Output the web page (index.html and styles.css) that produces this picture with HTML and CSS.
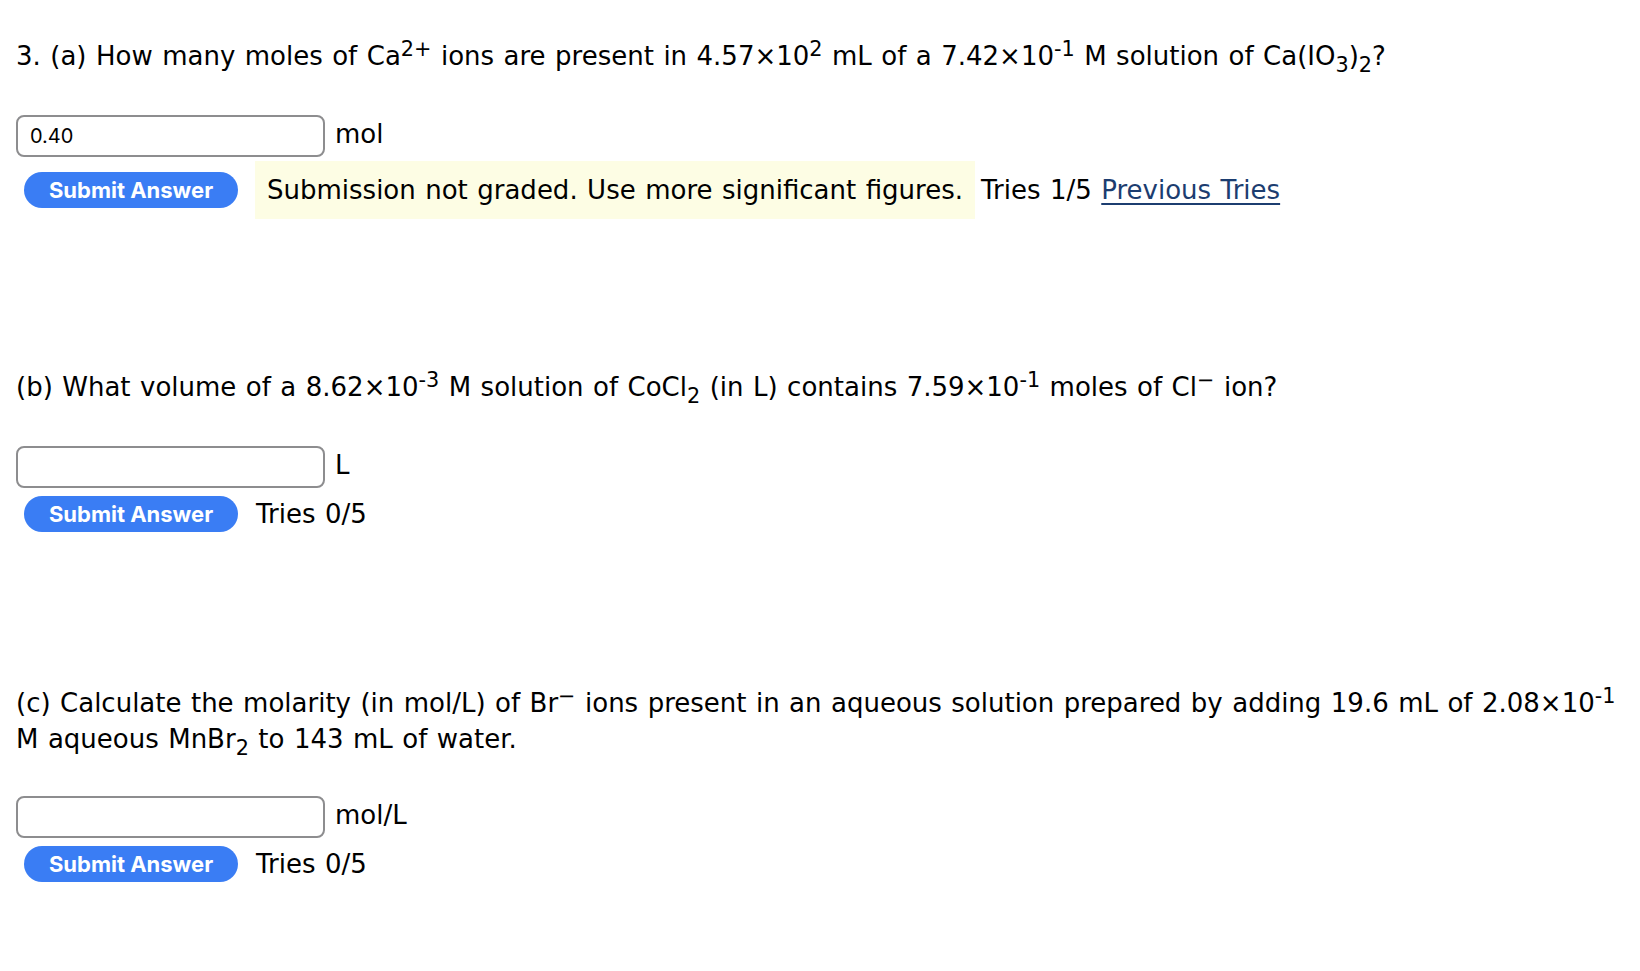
FILE: index.html
```html
<!DOCTYPE html>
<html lang="en">
<head>
<meta charset="utf-8">
<title>Question 3</title>
<link rel="stylesheet" href="styles.css">
</head>
<body>
<main class="page">
  <section class="part part-first">
    <p class="question">3. (a) How many moles of Ca<sup>2+</sup> ions are present in 4.57×10<sup>2</sup> mL of a 7.42×10<sup>-1</sup> M solution of Ca(IO<sub>3</sub>)<sub>2</sub>?</p>
    <div class="field">
      <input class="answer-box" type="text" value="0.40">
      <span class="unit">mol</span>
    </div>
    <div class="actions">
      <button class="submit" type="button">Submit Answer</button>
      <span class="feedback">Submission not graded. Use more significant figures.</span>
      <span class="tries tries-after">Tries 1/5 <a class="prev" href="#">Previous Tries</a></span>
    </div>
  </section>

  <section class="part">
    <p class="question">(b) What volume of a 8.62×10<sup>-3</sup> M solution of CoCl<sub>2</sub> (in L) contains 7.59×10<sup>-1</sup> moles of Cl<sup>−</sup> ion?</p>
    <div class="field">
      <input class="answer-box" type="text" value="">
      <span class="unit">L</span>
    </div>
    <div class="actions">
      <button class="submit" type="button">Submit Answer</button>
      <span class="tries">Tries 0/5</span>
    </div>
  </section>

  <section class="part part-last">
    <p class="question">(c) Calculate the molarity (in mol/L) of Br<sup>−</sup> ions present in an aqueous solution prepared by adding 19.6 mL of 2.08×10<sup>-1</sup> M aqueous MnBr<sub>2</sub> to 143 mL of water.</p>
    <div class="field">
      <input class="answer-box" type="text" value="">
      <span class="unit">mol/L</span>
    </div>
    <div class="actions">
      <button class="submit" type="button">Submit Answer</button>
      <span class="tries">Tries 0/5</span>
    </div>
  </section>
</main>
</body>
</html>
```

FILE: styles.css
```css
html, body {
  margin: 0;
  padding: 0;
  background: #ffffff;
}

body {
  font-family: "DejaVu Sans", Verdana, sans-serif;
  font-size: 26px;
  line-height: 36px;
  word-spacing: 1.2px;
  color: #000000;
}

.page {
  padding: 38px 16px 40px 16px;
}

.part + .part {
  margin-top: 154px;
}

.part + .part-last {
  margin-top: 153px;
}

.question {
  margin: 0;
  max-width: 1600px;
}

.question sup,
.question sub {
  font-size: 0.8em;
  line-height: 1;
}

.question sup {
  vertical-align: 0.42em;
}

.question sub {
  vertical-align: -0.34em;
}

.field {
  display: flex;
  align-items: center;
  margin-top: 39px;
}

.part-last .field {
  margin-top: 37px;
}

.answer-box {
  box-sizing: border-box;
  width: 309px;
  height: 42px;
  margin: 0;
  padding: 0 12px;
  border: 2px solid #8d8d8f;
  border-radius: 8px;
  font-family: Inter, "Liberation Sans", sans-serif;
  font-size: 20px;
  word-spacing: 0;
  color: #000;
  background: #fff;
  outline: none;
}

.unit {
  margin-left: 10px;
  margin-top: -4px;
}

.actions {
  display: flex;
  align-items: center;
  margin-top: 8px;
}

.submit {
  box-sizing: border-box;
  width: 214px;
  height: 36px;
  margin: 0 0 0 8px;
  padding: 0;
  border: none;
  border-radius: 18px;
  background: #3a7df4;
  color: #ffffff;
  font-family: Inter, "Liberation Sans", sans-serif;
  font-weight: 700;
  font-size: 22px;
  word-spacing: 0;
  line-height: 36px;
  cursor: pointer;
}

.feedback {
  margin: -4px 0 -4px 17px;
  padding: 11px 12px;
  background: #fdfde4;
  white-space: nowrap;
}

.tries {
  margin-left: 18px;
  white-space: nowrap;
}

.tries.tries-after {
  margin-left: 6px;
}

.prev {
  color: #1c3d70;
  text-decoration: underline;
  text-underline-offset: 4px;
}
```
